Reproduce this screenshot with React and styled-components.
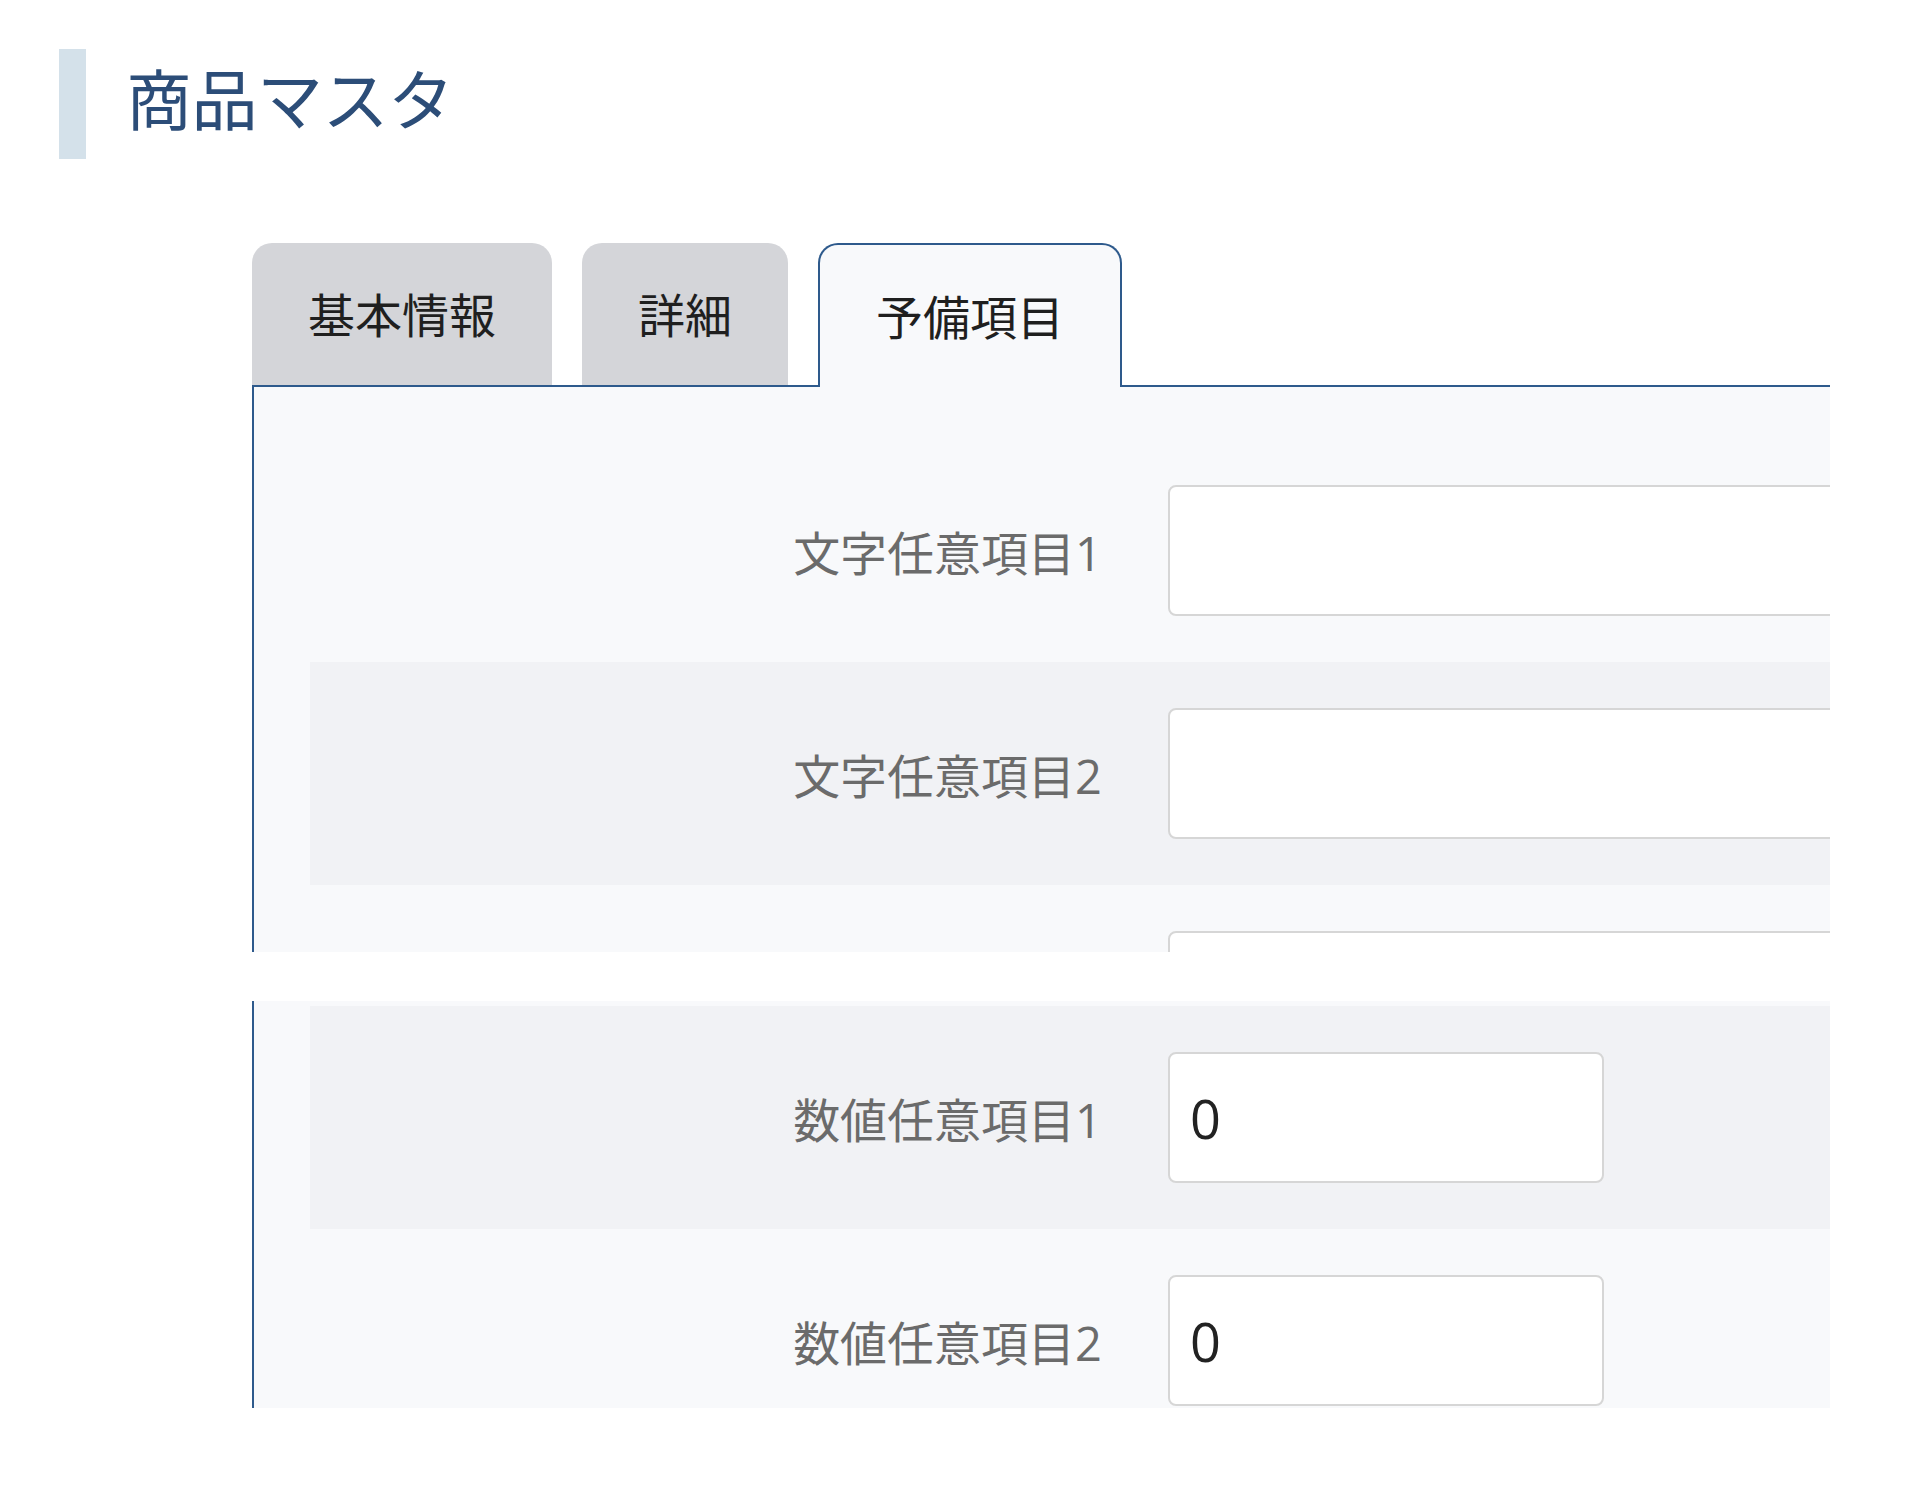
import React from "react";
import styled, { createGlobalStyle } from "styled-components";

const GlobalStyle = createGlobalStyle`
  html, body {
    margin: 0;
    padding: 0;
    background: #ffffff;
  }
  body {
    font-family: "Open Sans", "Noto Sans CJK JP", sans-serif;
  }
`;

const Page = styled.div`
  padding-top: 49px;
  width: 1922px;
  min-height: 1485px;
  box-sizing: border-box;
`;

const Heading = styled.div`
  display: flex;
  align-items: center;
  height: 110px;
  margin-left: 59px;
  border-left: 27px solid #d4e1ea;
  padding-left: 40px;
`;

const Title = styled.h1`
  margin: 0 0 16px;
  font-family: "Noto Sans CJK JP", sans-serif;
  font-weight: 400;
  font-size: 66px;
  line-height: 1;
  color: #2c4d78;
  letter-spacing: -0.5px;
`;

const Content = styled.div`
  margin-top: 84px;
  margin-left: 252px;
  width: 1578px;
  overflow: hidden;
`;

const TabBar = styled.div`
  display: flex;
  align-items: flex-end;
  gap: 30px;
  height: 142px;
  position: relative;
  z-index: 1;
`;

const Tab = styled.div`
  box-sizing: border-box;
  display: flex;
  align-items: center;
  justify-content: center;
  padding: 0 56px 4px;
  font-family: "Noto Sans CJK JP", sans-serif;
  font-size: 47px;
  color: #1f1f1f;
  border-radius: 20px 20px 0 0;
  background: ${(p) => (p.$active ? "#f8f9fb" : "#d4d5d9")};
  height: ${(p) => (p.$active ? "144px" : "142px")};
  margin-bottom: ${(p) => (p.$active ? "-2px" : "0")};
  border: ${(p) => (p.$active ? "2px solid #2e5a8c" : "none")};
  border-bottom: none;
`;

const Panel = styled.div`
  box-sizing: border-box;
  background: #f8f9fb;
  border-left: 2px solid #2e5a8c;
  border-top: ${(p) => (p.$top ? "2px solid #2e5a8c" : "none")};
  padding: ${(p) => (p.$top ? "52px 0 0 56px" : "5px 0 0 56px")};
  height: ${(p) => p.$h}px;
  overflow: hidden;
`;

const Gap = styled.div`
  height: 49px;
  background: #ffffff;
`;

const Row = styled.div`
  display: grid;
  grid-template-columns: 792px minmax(0, 1fr);
  column-gap: 66px;
  align-items: center;
  padding: 46px 0;
  background: ${(p) => (p.$alt ? "#f1f2f5" : "transparent")};
`;

const Label = styled.label`
  justify-self: end;
  font-family: "Open Sans", "Noto Sans CJK JP", sans-serif;
  font-size: 47px;
  color: #6b6b6b;
  white-space: nowrap;
`;

const Input = styled.input`
  box-sizing: border-box;
  width: ${(p) => (p.$short ? "436px" : "800px")};
  height: 131px;
  border: 2px solid #d6d6d6;
  border-radius: 8px;
  background: #fff;
  padding: 0 20px;
  font-family: "Open Sans", sans-serif;
  font-size: 54px;
  color: #222;
  outline: none;
`;

const topRows = [
  { id: "t1", label: "文字任意項目1" },
  { id: "t2", label: "文字任意項目2", alt: true },
  { id: "t3", label: "" },
];

const bottomRows = [
  { id: "n1", label: "数値任意項目1", alt: true, value: "0" },
  { id: "n2", label: "数値任意項目2", value: "0" },
];

export default function App() {
  return (
    <>
      <GlobalStyle />
      <Page>
        <Heading>
          <Title>商品マスタ</Title>
        </Heading>
        <Content>
          <TabBar>
            <Tab>基本情報</Tab>
            <Tab>詳細</Tab>
            <Tab $active>予備項目</Tab>
          </TabBar>
          <Panel $top $h={567}>
            {topRows.map((r) => (
              <Row key={r.id} $alt={r.alt}>
                <Label>{r.label}</Label>
                <Input type="text" defaultValue="" />
              </Row>
            ))}
          </Panel>
          <Gap />
          <Panel $h={407}>
            {bottomRows.map((r) => (
              <Row key={r.id} $alt={r.alt}>
                <Label>{r.label}</Label>
                <Input type="text" $short defaultValue={r.value} />
              </Row>
            ))}
          </Panel>
        </Content>
      </Page>
    </>
  );
}
